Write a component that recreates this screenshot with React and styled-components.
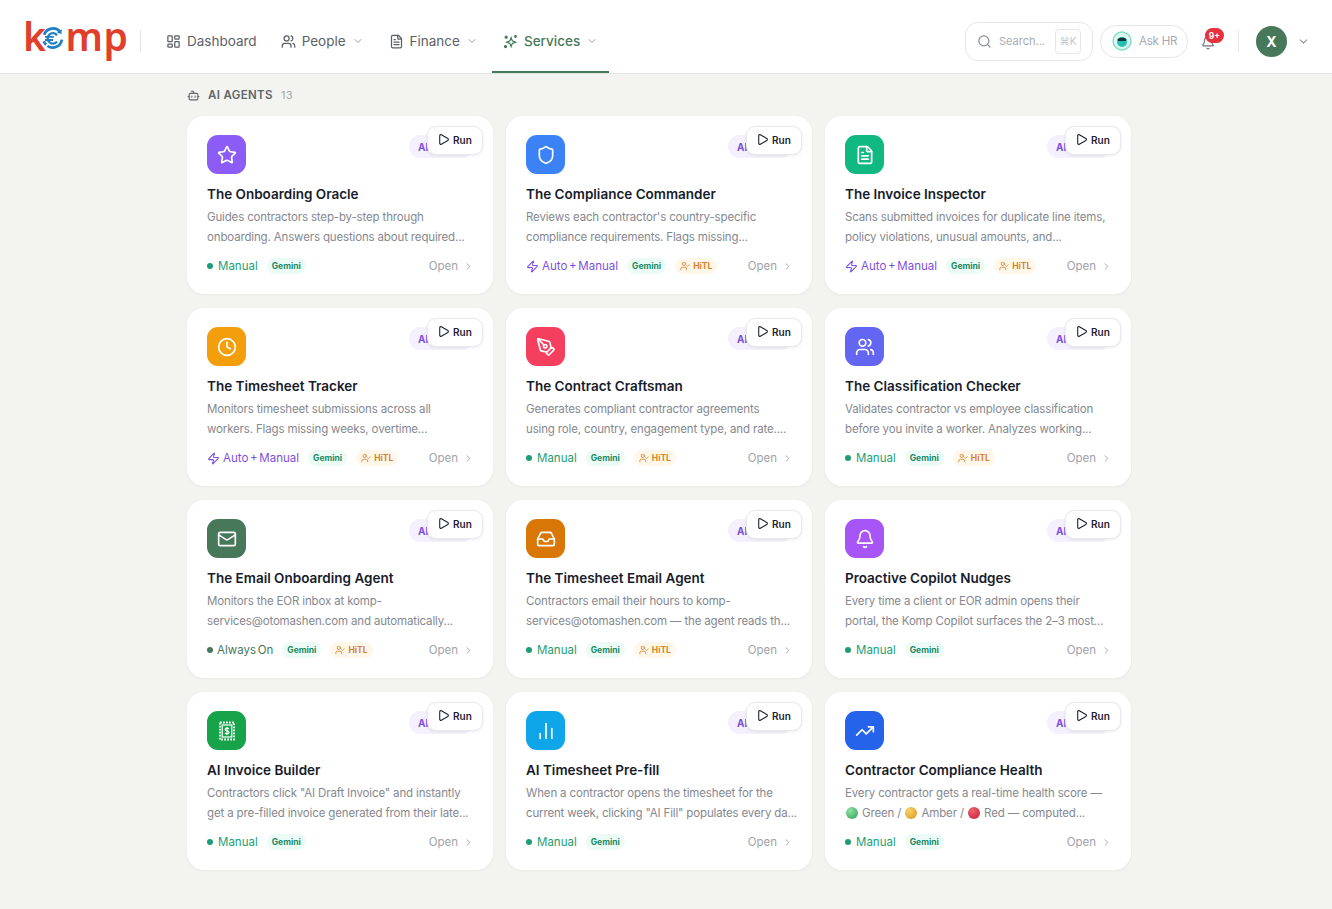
import React from "react";
import styled, { createGlobalStyle } from "styled-components";
import {
  LayoutDashboard,
  Users,
  FileText,
  ChevronDown,
  ChevronRight,
  Bot,
  Search,
  Bell,
  Play,
  Star,
  Shield,
  Clock,
  PenTool,
  Mail,
  Inbox,
  ChartNoAxesColumn,
  TrendingUp,
  Zap,
  UserCheck,
} from "lucide-react";

const GlobalStyle = createGlobalStyle`
  html, body {
    margin: 0;
    padding: 0;
    background: #ffffff;
    font-family: "Inter", "Liberation Sans", sans-serif;
  }
  * {
    box-sizing: border-box;
  }
`;

const Header = styled.header`
  height: 74px;
  display: flex;
  align-items: center;
  padding: 9px 0 0 25px;
  background: #ffffff;
  border-bottom: 1px solid #e4e5e2;
`;

const Logo = styled.div`
  width: 102px;
  display: flex;
  align-items: center;
  height: 40px;
  margin: -10px 0 0 -2px;
  font-family: "Noto Sans", sans-serif;
  font-size: 39px;
  font-weight: 600;
  letter-spacing: 0.5px;
  color: #e0402b;
  line-height: 40px;
  svg {
    margin: 4px 0 0 -5px;
    flex: none;
  }
`;

const VLine = styled.div`
  width: 1px;
  height: 22px;
  background: #e6e6e4;
  margin: ${(p) => p.$margin};
`;

const Nav = styled.nav`
  display: flex;
  align-items: stretch;
  align-self: stretch;
  margin-left: 13px;
`;

const NavItem = styled.a`
  display: flex;
  align-items: center;
  gap: 6px;
  padding: 0 ${(p) => (p.$active ? 11 : 12)}px;
  font-size: 13.5px;
  color: ${(p) => (p.$active ? "#47785a" : "#5c5f66")};
  font-weight: ${(p) => (p.$active ? 500 : 400)};
  border-bottom: 2px solid ${(p) => (p.$active ? "#47785a" : "transparent")};
  border-top: 2px solid transparent;
  margin-right: ${(p) => p.$mr || 0}px;
`;

const NavChevron = styled(ChevronDown)`
  color: #9a9da3;
`;

const HeaderRight = styled.div`
  margin-left: auto;
  display: flex;
  align-items: center;
  padding-right: 22px;
`;

const SearchBox = styled.div`
  width: 128px;
  height: 39px;
  display: flex;
  align-items: center;
  gap: 7px;
  padding: 0 11px;
  border: 1px solid #e6e7ea;
  border-radius: 13px;
  font-size: 11px;
  color: #a9abb3;
  svg {
    color: #8b8e95;
  }
`;

const Kbd = styled.span`
  margin-left: auto;
  width: 26px;
  height: 25px;
  flex: none;
  display: flex;
  align-items: center;
  justify-content: center;
  border: 1px solid #e6e7ea;
  border-radius: 4px;
  font-size: 10px;
  color: #c4c5cb;
`;

const AskButton = styled.div`
  width: 88px;
  height: 33px;
  margin-left: 7px;
  display: flex;
  align-items: center;
  gap: 7px;
  padding-left: 11px;
  border: 1px solid #e6e7ea;
  border-radius: 16px;
  font-size: 11.5px;
  letter-spacing: -0.2px;
  color: #a6a8b0;
`;

const BellWrap = styled.div`
  position: relative;
  width: 16px;
  height: 16px;
  margin-left: 13px;
  margin-top: 2px;
  color: #6f7278;
`;

const Badge = styled.span`
  position: absolute;
  top: -6px;
  left: 4px;
  width: 19px;
  height: 15px;
  border-radius: 8px;
  background: #e5323c;
  color: #ffffff;
  font-size: 8.5px;
  font-weight: 700;
  display: flex;
  align-items: center;
  justify-content: center;
`;

const Avatar = styled.div`
  width: 31px;
  height: 31px;
  border-radius: 50%;
  background: #47785a;
  color: #ffffff;
  font-size: 14px;
  font-weight: 700;
  display: flex;
  align-items: center;
  justify-content: center;
`;

const UserChevron = styled(ChevronDown)`
  margin-left: 10px;
  color: #8f9298;
`;

const Main = styled.main`
  min-height: 835px;
  background: #f3f4ef;
  padding: 13px 0 0 187px;
`;

const SectionHead = styled.div`
  display: flex;
  align-items: center;
  height: 16px;
  margin-bottom: 13px;
  font-size: 11.5px;
  font-weight: 600;
  letter-spacing: 0.35px;
  color: #61646b;
  svg {
    margin-right: 8px;
  }
`;

const Count = styled.span`
  margin-left: 8px;
  font-size: 11px;
  font-weight: 400;
  color: #a4a6ab;
`;

const Grid = styled.div`
  display: grid;
  grid-template-columns: repeat(3, 306px);
  grid-auto-rows: 178px;
  column-gap: 13px;
  row-gap: 14px;
`;

const Card = styled.article`
  position: relative;
  padding: 19px 22px 0 20px;
  background: #ffffff;
  border-radius: 17px;
  box-shadow: 0 1px 3px rgba(30, 35, 30, 0.05);
`;

const TopRow = styled.div`
  display: flex;
  justify-content: space-between;
  align-items: flex-start;
  height: 39px;
`;

const IconTile = styled.div`
  width: 39px;
  height: 39px;
  border-radius: 11px;
  background: ${(p) => p.$bg};
  color: #ffffff;
  display: flex;
  align-items: center;
  justify-content: center;
`;

const TypePill = styled.span`
  width: 64px;
  height: 23px;
  overflow: hidden;
  white-space: nowrap;
  display: flex;
  align-items: center;
  padding-left: 9px;
  border-radius: 12px;
  background: #f4f1fd;
  color: #7c4fe0;
  font-size: 10px;
  font-weight: 700;
  margin-right: -2px;
`;

const RunButton = styled.button`
  position: absolute;
  top: 10px;
  right: 10px;
  width: 56px;
  height: 29px;
  padding: 0 0 2px 9px;
  display: flex;
  align-items: center;
  gap: 3px;
  background: #ffffff;
  border: 1px solid #e9e9ee;
  border-radius: 9px;
  box-shadow: 0 1px 3px rgba(20, 20, 40, 0.08);
  font-family: inherit;
  font-size: 10px;
  font-weight: 600;
  color: #1d2230;
`;

const Title = styled.h3`
  margin: 11px 0 0;
  font-size: 13.5px;
  line-height: 18px;
  font-weight: 600;
  color: #171c2b;
`;

const Desc = styled.p`
  margin: 4px -4px 0 0;
  font-size: 11.5px;
  line-height: 20px;
  letter-spacing: -0.15px;
  white-space: pre;
  color: #858890;
`;

const Orb = styled.span`
  display: inline-block;
  width: 12px;
  height: 12px;
  margin: 0 1px;
  vertical-align: -2px;
  border-radius: 50%;
  background: radial-gradient(circle at 35% 30%, ${(p) => p.$light}, ${(p) => p.$dark});
`;

const Footer = styled.div`
  display: flex;
  align-items: center;
  height: 20px;
  margin-top: 9px;
`;

const Mode = styled.span`
  display: flex;
  align-items: center;
  gap: ${(p) => p.$gap}px;
  font-size: 11.5px;
  word-spacing: -1.5px;
  color: ${(p) => p.$color};
`;

const Dot = styled.span`
  width: 6px;
  height: 6px;
  border-radius: 50%;
  background: ${(p) => p.$color};
`;

const Tag = styled.span`
  height: 16px;
  margin-left: 9px;
  padding: 0 5px;
  display: flex;
  align-items: center;
  gap: 3px;
  border-radius: 8px;
  font-size: 8.5px;
  font-weight: 700;
  background: ${(p) => p.$bg};
  color: ${(p) => p.$color};
`;

const OpenLink = styled.span`
  margin-left: auto;
  margin-right: -3px;
  display: flex;
  align-items: center;
  gap: 5px;
  font-size: 11.5px;
  color: #a0a3a9;
`;

const GREEN = "#1b9e73";
const PURPLE = "#7c4fe0";
const FOREST = "#47785a";

const StampIcon = () => (
  <svg width="18" height="20" viewBox="0 0 18 20" fill="none" stroke="currentColor">
    <rect x="2" y="1.5" width="14" height="17" strokeWidth="1.8" strokeDasharray="1.8 1.2" />
    <rect x="4.2" y="4" width="9.6" height="12" strokeWidth="1.2" />
    <path
      d="M11 8c-.4-.7-1.1-.9-2-.9-1.1 0-1.9.5-1.9 1.4 0 1.9 3.9 1 3.9 2.9 0 1-.9 1.5-2 1.5-.9 0-1.6-.3-2-1M9 6v8"
      strokeWidth="1.2"
    />
  </svg>
);

const ServicesIcon = () => (
  <svg width="15" height="15" viewBox="0 0 24 24" fill="none" stroke="currentColor" strokeWidth="2">
    <path d="M12 7l2 5 5 2-5 2-2 5-2-5-5-2 5-2z" transform="translate(1 -1)" />
    <circle cx="5" cy="5" r="1.6" fill="currentColor" />
    <circle cx="20" cy="4" r="1.3" fill="currentColor" />
    <circle cx="4" cy="20" r="1.6" fill="currentColor" />
  </svg>
);

const EuroMark = () => (
  <svg width="24" height="24" viewBox="0 0 30 30" fill="none" stroke="#1f7fc4">
    <path d="M24 7.5A11.5 11.5 0 0 0 4 11" strokeWidth="3.4" />
    <path d="M20 8.5l5.5 1.5.5-6z" fill="#1f7fc4" stroke="none" />
    <path d="M26 17A11.5 11.5 0 0 1 8 25" strokeWidth="3.4" />
    <path d="M3.5 19a11.5 11.5 0 0 0 3 4.5" strokeWidth="3.4" />
    <path d="M20 11.5a6.5 6.5 0 1 0 0 8" strokeWidth="2.8" />
    <path d="M5 13.5h11M5 17.5h10" strokeWidth="2.2" />
  </svg>
);

const AskIcon = () => (
  <svg width="20" height="20" viewBox="0 0 20 20">
    <circle cx="10" cy="10" r="9" fill="#dff6ef" stroke="#7fe0c6" strokeWidth="1.4" />
    <circle cx="10" cy="11" r="5" fill="#22c3b0" />
    <path d="M5.5 8.5C6 6 14 6 14.5 8.5L14 10H6z" fill="#123038" />
  </svg>
);

const agents = [
  {
    title: "The Onboarding Oracle",
    desc: "Guides contractors step-by-step through\nonboarding. Answers questions about required...",
    icon: <Star size={20} />,
    bg: "#8b5cf6",
    mode: "manual",
  },
  {
    title: "The Compliance Commander",
    desc: "Reviews each contractor's country-specific\ncompliance requirements. Flags missing...",
    icon: <Shield size={20} />,
    bg: "#3b82f6",
    mode: "auto",
    hitl: true,
  },
  {
    title: "The Invoice Inspector",
    desc: "Scans submitted invoices for duplicate line items,\npolicy violations, unusual amounts, and...",
    icon: <FileText size={20} />,
    bg: "#10b981",
    mode: "auto",
    hitl: true,
  },
  {
    title: "The Timesheet Tracker",
    desc: "Monitors timesheet submissions across all\nworkers. Flags missing weeks, overtime...",
    icon: <Clock size={20} />,
    bg: "#f59e0b",
    mode: "auto",
    hitl: true,
  },
  {
    title: "The Contract Craftsman",
    desc: "Generates compliant contractor agreements\nusing role, country, engagement type, and rate....",
    icon: <PenTool size={20} />,
    bg: "#f43f5e",
    mode: "manual",
    hitl: true,
  },
  {
    title: "The Classification Checker",
    desc: "Validates contractor vs employee classification\nbefore you invite a worker. Analyzes working...",
    icon: <Users size={20} />,
    bg: "#6366f1",
    mode: "manual",
    hitl: true,
  },
  {
    title: "The Email Onboarding Agent",
    desc: "Monitors the EOR inbox at komp-\nservices@otomashen.com and automatically...",
    icon: <Mail size={20} />,
    bg: FOREST,
    mode: "always",
    hitl: true,
  },
  {
    title: "The Timesheet Email Agent",
    desc: "Contractors email their hours to komp-\nservices@otomashen.com — the agent reads th...",
    icon: <Inbox size={20} />,
    bg: "#d97706",
    mode: "manual",
    hitl: true,
  },
  {
    title: "Proactive Copilot Nudges",
    desc: "Every time a client or EOR admin opens their\nportal, the Komp Copilot surfaces the 2–3 most...",
    icon: <Bell size={20} />,
    bg: "#a855f7",
    mode: "manual",
  },
  {
    title: "AI Invoice Builder",
    desc: 'Contractors click "AI Draft Invoice" and instantly\nget a pre-filled invoice generated from their late...',
    icon: <StampIcon />,
    bg: "#16a34a",
    mode: "manual",
  },
  {
    title: "AI Timesheet Pre-fill",
    desc: 'When a contractor opens the timesheet for the\ncurrent week, clicking "AI Fill" populates every da...',
    icon: <ChartNoAxesColumn size={20} />,
    bg: "#0ea5e9",
    mode: "manual",
  },
  {
    title: "Contractor Compliance Health",
    desc: (
      <>
        {"Every contractor gets a real-time health score —\n"}
        <Orb $light="#8fe3a0" $dark="#2f9e58" /> Green / <Orb $light="#f8d468" $dark="#d9921c" /> Amber /{" "}
        <Orb $light="#f0606f" $dark="#c21f38" /> Red — computed...
      </>
    ),
    icon: <TrendingUp size={20} />,
    bg: "#2563eb",
    mode: "manual",
  },
];

const ModeLabel = ({ mode }) => {
  if (mode === "auto") {
    return (
      <Mode $color={PURPLE} $gap={3}>
        <Zap size={13} />
        Auto + Manual
      </Mode>
    );
  }
  if (mode === "always") {
    return (
      <Mode $color={FOREST} $gap={4}>
        <Dot $color={FOREST} />
        Always On
      </Mode>
    );
  }
  return (
    <Mode $color={GREEN} $gap={5}>
      <Dot $color={GREEN} />
      Manual
    </Mode>
  );
};

const AgentCard = ({ agent }) => (
  <Card>
    <TopRow>
      <IconTile $bg={agent.bg}>{agent.icon}</IconTile>
      <TypePill>AI Agent</TypePill>
    </TopRow>
    <RunButton>
      <Play size={13} />
      Run
    </RunButton>
    <Title>{agent.title}</Title>
    <Desc>{agent.desc}</Desc>
    <Footer>
      <ModeLabel mode={agent.mode} />
      <Tag $bg="#ecfbf5" $color="#1b8a66">
        Gemini
      </Tag>
      {agent.hitl && (
        <Tag $bg="#fff7ea" $color="#d9822b">
          <UserCheck size={10} />
          HiTL
        </Tag>
      )}
      <OpenLink>
        Open
        <ChevronRight size={11} />
      </OpenLink>
    </Footer>
  </Card>
);

const App = () => {
  return (
    <>
      <GlobalStyle />
      <Header>
        <Logo>
          k
          <EuroMark />
          mp
        </Logo>
        <VLine $margin="0 0 0 15px" />
        <Nav>
          <NavItem>
            <LayoutDashboard size={15} />
            Dashboard
          </NavItem>
          <NavItem $mr={1}>
            <Users size={15} />
            People
            <NavChevron size={12} />
          </NavItem>
          <NavItem $mr={2}>
            <FileText size={15} />
            Finance
            <NavChevron size={12} />
          </NavItem>
          <NavItem $active>
            <ServicesIcon />
            Services
            <NavChevron size={12} />
          </NavItem>
        </Nav>
        <HeaderRight>
          <SearchBox>
            <Search size={15} />
            Search...
            <Kbd>⌘K</Kbd>
          </SearchBox>
          <AskButton>
            <AskIcon />
            Ask HR
          </AskButton>
          <BellWrap>
            <Bell size={14} />
            <Badge>9+</Badge>
          </BellWrap>
          <VLine $margin="0 17px 0 21px" />
          <Avatar>X</Avatar>
          <UserChevron size={13} />
        </HeaderRight>
      </Header>
      <Main>
        <SectionHead>
          <Bot size={13} />
          AI AGENTS
          <Count>13</Count>
        </SectionHead>
        <Grid>
          {agents.map((agent) => (
            <AgentCard key={agent.title} agent={agent} />
          ))}
        </Grid>
      </Main>
    </>
  );
};

export default App;
